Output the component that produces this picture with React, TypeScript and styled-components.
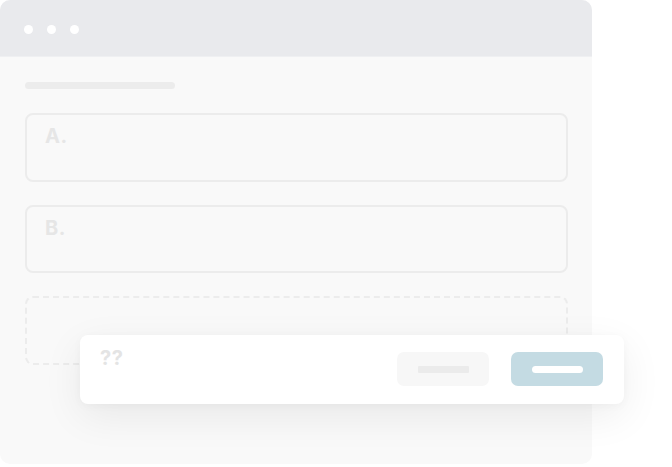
import React from "react";
import styled, { createGlobalStyle } from "styled-components";

const Global = createGlobalStyle`
  html, body { margin: 0; padding: 0; background: #ffffff; }
  body { font-family: "Inter", "Liberation Sans", Arial, sans-serif; }
`;

const Stage = styled.div`
  position: relative;
  width: 672px;
  height: 467px;
  overflow: hidden;
  background: #ffffff;
`;

const Window = styled.div`
  width: 592px;
  height: 464px;
  border-radius: 10px;
  overflow: hidden;
  background: #f9f9f9;
  display: flex;
  flex-direction: column;
`;

const Header = styled.div`
  height: 57px;
  background: #e9eaed;
  display: flex;
  align-items: center;
  gap: 14px;
  padding-left: 24px;
  padding-top: 2px;
  box-sizing: border-box;
  border-bottom: 1px solid #eff0f2;
`;

const Dot = styled.span`
  width: 9px;
  height: 9px;
  border-radius: 50%;
  background: #ffffff;
`;

const Body = styled.div`
  flex: 1;
  padding: 25px 25px 0 25px;
  display: flex;
  flex-direction: column;
`;

const TitleBar = styled.div`
  width: 150px;
  height: 7px;
  border-radius: 4px;
  background: #ececec;
  margin-bottom: 24px;
`;

const Option = styled.div<{ $dashed?: boolean }>`
  height: 68.5px;
  box-sizing: border-box;
  border: 2px ${(p) => (p.$dashed ? "dashed" : "solid")} #ececec;
  border-radius: 8px;
  padding: 9px 18px;
  margin-bottom: 23px;
  width: 543px;
`;

const Letter = styled.span`
  font-family: "Inter", "Liberation Sans", Arial, sans-serif;
  font-weight: 700;
  font-size: 20px;
  color: #e6e6e6;
  letter-spacing: 0.5px;
`;

const Dialog = styled.div`
  position: absolute;
  left: 80px;
  top: 335px;
  width: 544px;
  height: 69px;
  background: #ffffff;
  border-radius: 8px;
  box-shadow: 0 12px 40px rgba(0, 0, 0, 0.07), 0 2px 10px rgba(0, 0, 0, 0.03);
  display: flex;
  align-items: flex-start;
  box-sizing: border-box;
  padding: 11px 21px 0 20px;
`;

const Question = styled.span`
  font-family: "Inter", "Liberation Sans", Arial, sans-serif;
  font-weight: 700;
  font-size: 20px;
  color: #e4e4e4;
  flex: 1;
  letter-spacing: 0.5px;
`;

const Actions = styled.div`
  display: flex;
  gap: 22px;
  margin-top: 6px;
`;

const Button = styled.div<{ $primary?: boolean }>`
  width: 92px;
  height: 34px;
  border-radius: 7px;
  background: ${(p) => (p.$primary ? "#c4dbe3" : "#f7f7f7")};
  display: flex;
  align-items: center;
  justify-content: center;
`;

const ButtonBar = styled.span<{ $primary?: boolean }>`
  width: 51px;
  height: 7px;
  border-radius: ${(p) => (p.$primary ? "4px" : "1px")};
  background: ${(p) => (p.$primary ? "#ffffff" : "#ebebeb")};
`;

export default function App() {
  return (
    <>
      <Global />
      <Stage>
        <Window>
          <Header>
            <Dot />
            <Dot />
            <Dot />
          </Header>
          <Body>
            <TitleBar />
            <Option>
              <Letter>A.</Letter>
            </Option>
            <Option>
              <Letter>B.</Letter>
            </Option>
            <Option $dashed />
          </Body>
        </Window>
        <Dialog>
          <Question>??</Question>
          <Actions>
            <Button>
              <ButtonBar />
            </Button>
            <Button $primary>
              <ButtonBar $primary />
            </Button>
          </Actions>
        </Dialog>
      </Stage>
    </>
  );
}
